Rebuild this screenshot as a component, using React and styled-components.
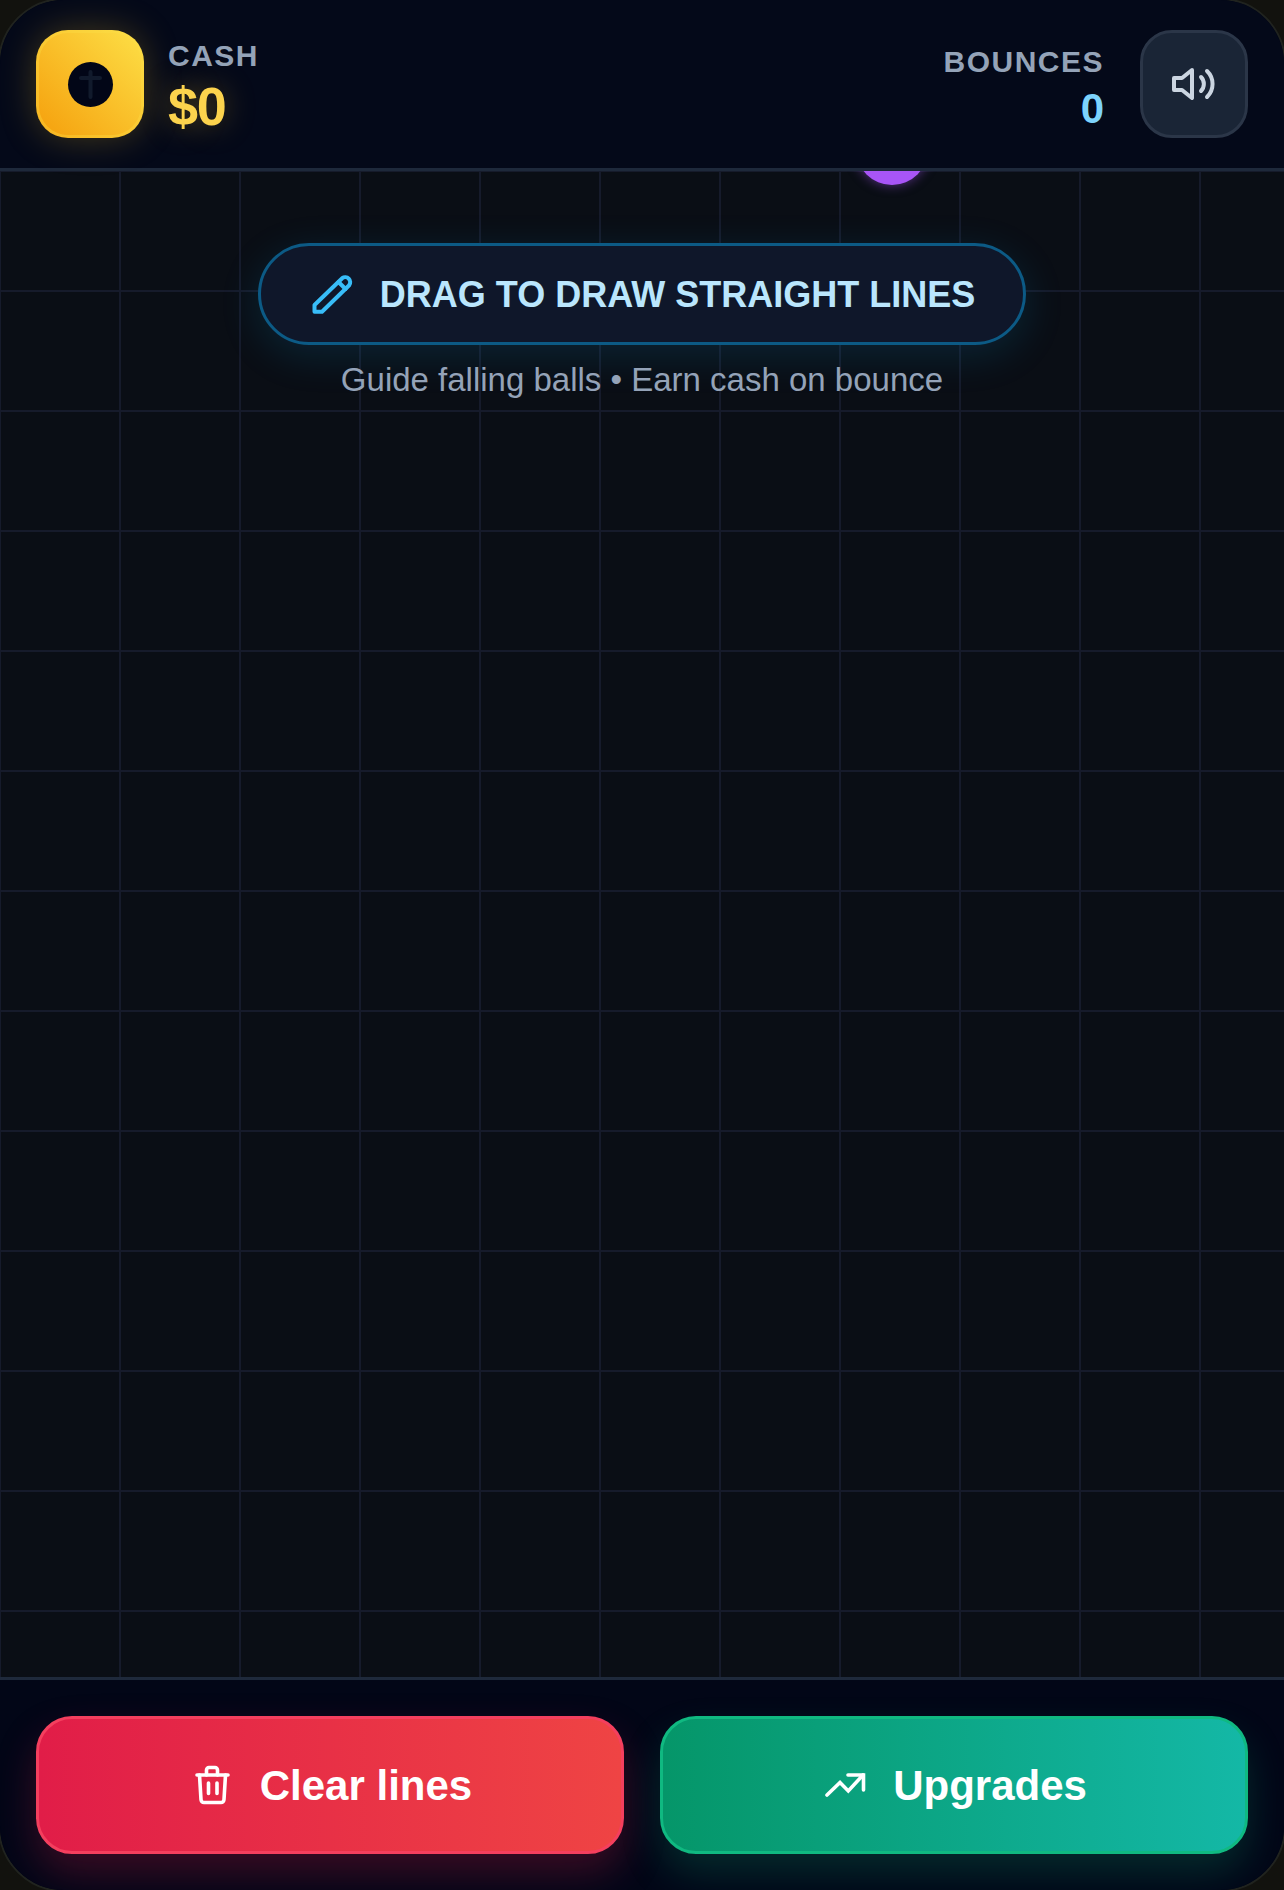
import React from 'react';
import styled, { createGlobalStyle } from 'styled-components';

const GlobalStyle = createGlobalStyle`
  html, body {
    margin: 0;
    padding: 0;
    overflow: hidden;
    background: #12120e;
  }
  * {
    box-sizing: border-box;
  }
`;

const App = () => (
  <Frame>
    <GlobalStyle />
    <Header>
      <CashGroup>
        <CoinBox>
          <Coin>
            <svg width="45" height="45" viewBox="0 0 45 45" fill="none" stroke="#111a2c" strokeWidth="4" strokeLinecap="round">
              <path d="M22.5 10v25M13 16h19" />
            </svg>
          </Coin>
        </CoinBox>
        <CashStat>
          <CashLabel>CASH</CashLabel>
          <CashValue>$0</CashValue>
        </CashStat>
      </CashGroup>
      <BounceGroup>
        <BounceStat>
          <BounceLabel>BOUNCES</BounceLabel>
          <BounceValue>0</BounceValue>
        </BounceStat>
        <SoundButton>
          <svg width="48" height="48" viewBox="0 0 24 24" fill="none" stroke="#cbd5e1" strokeWidth="2" strokeLinecap="round" strokeLinejoin="round">
            <path d="M11 5 6 9H2v6h4l5 4z" />
            <path d="M15.5 8.5a5 5 0 0 1 0 7" />
            <path d="M18.5 5.5a9 9 0 0 1 0 13" />
          </svg>
        </SoundButton>
      </BounceGroup>
    </Header>
    <Board>
      <Ball />
      <Hint>
        <HintPill>
          <svg width="48" height="48" viewBox="0 0 48 48" fill="none" stroke="#38bdf8" strokeWidth="4" strokeLinecap="round" strokeLinejoin="round">
            <path d="M36.2 8.2a5 5 0 0 1 7 7L16 41.7H8.5V35z" />
            <path d="M32.5 12 39.5 19" />
          </svg>
          <HintText>DRAG TO DRAW STRAIGHT LINES</HintText>
        </HintPill>
        <HintSub>Guide falling balls • Earn cash on bounce</HintSub>
      </Hint>
    </Board>
    <Footer>
      <ActionButton $from="#e11d48" $to="#ef4444" $edge="#f43f5e" $glow="rgba(225, 29, 72, 0.25)">
        <svg width="48" height="48" viewBox="0 0 48 48" fill="none" stroke="#fff" strokeWidth="3.6" strokeLinecap="round" strokeLinejoin="round">
          <path d="M9 14h31" />
          <path d="M18.5 14V9a2.5 2.5 0 0 1 2.5-2.5h6A2.5 2.5 0 0 1 29.5 9v5" />
          <path d="M11.5 14 13 38.5a3 3 0 0 0 3 3h17a3 3 0 0 0 3-3L37.5 14" />
          <path d="M20.5 22v10.5M29 22v10.5" />
        </svg>
        <ActionLabel>Clear lines</ActionLabel>
      </ActionButton>
      <ActionButton $from="#059669" $to="#14b8a6" $edge="#10b981" $glow="rgba(16, 185, 129, 0.2)">
        <svg width="48" height="48" viewBox="0 0 48 48" fill="none" stroke="#fff" strokeWidth="3.6" strokeLinecap="round" strokeLinejoin="miter">
          <path d="M6 34 19 21.5l8.3 8.5L42 14" />
          <path d="M27 14h15.5v15" />
        </svg>
        <ActionLabel>Upgrades</ActionLabel>
      </ActionButton>
    </Footer>
  </Frame>
);

export default App;

const Frame = styled.div`
  width: 1288px;
  height: 1894px;
  margin: -2px;
  display: flex;
  flex-direction: column;
  border-radius: 66px;
  border: 2px solid #20231f;
  overflow: hidden;
  background: #020617;
  font-family: "Liberation Sans", Arial, sans-serif;
`;

const Header = styled.header`
  position: relative;
  z-index: 2;
  flex: 0 0 171px;
  padding: 0 36px;
  display: flex;
  align-items: center;
  justify-content: space-between;
  background: #040919;
  border-bottom: 3px solid #1e293b;
`;

const CashGroup = styled.div`
  display: flex;
  align-items: center;
  gap: 24px;
`;

const CoinBox = styled.div`
  width: 108px;
  height: 108px;
  display: flex;
  align-items: center;
  justify-content: center;
  border-radius: 32px;
  border: 3px solid rgba(253, 224, 71, 0.35);
  background: linear-gradient(45deg, #f59e0b, #fde047) border-box;
  box-shadow: 0 0 36px rgba(251, 191, 36, 0.25);
`;

const Coin = styled.div`
  width: 45px;
  height: 45px;
  flex: none;
  display: flex;
  align-items: center;
  justify-content: center;
  border-radius: 50%;
  background: #020617;
`;

const CashStat = styled.div`
  display: flex;
  flex-direction: column;
  align-items: flex-start;
`;

const BounceStat = styled.div`
  display: flex;
  flex-direction: column;
  align-items: flex-end;
`;

const CashLabel = styled.div`
  font-size: 30px;
  font-weight: 700;
  line-height: 40px;
  letter-spacing: 1.5px;
  color: #94a3b8;
`;

const BounceLabel = styled(CashLabel)`
  line-height: 50px;
`;

const CashValue = styled.div`
  margin-top: 3px;
  font-size: 54px;
  font-weight: 700;
  line-height: 54px;
  letter-spacing: -1.35px;
  color: #fcd34d;
  text-shadow: 0 0 30px rgba(251, 191, 36, 0.35);
`;

const BounceGroup = styled.div`
  display: flex;
  align-items: center;
  gap: 36px;
`;

const BounceValue = styled.div`
  font-size: 42px;
  font-weight: 700;
  line-height: 44px;
  color: #7dd3fc;
`;

const SoundButton = styled.button`
  width: 108px;
  height: 108px;
  padding: 0;
  display: flex;
  align-items: center;
  justify-content: center;
  border-radius: 32px;
  border: 3px solid #2b3648;
  background: #1a2536;
`;

const Board = styled.main`
  position: relative;
  flex: 1;
  display: flex;
  justify-content: center;
  background-color: #0a0e15;
  background-image:
    linear-gradient(#161b2b 2px, transparent 2px),
    linear-gradient(90deg, #161b2b 2px, transparent 2px);
  background-size: 120px 120px;
  background-position: -1px -1px;
`;

const Ball = styled.div`
  position: absolute;
  left: 856px;
  top: -58px;
  width: 72px;
  height: 72px;
  border-radius: 50%;
  background: #a855f7;
  box-shadow: 0 0 12px rgba(168, 85, 247, 0.5);
`;

const Hint = styled.div`
  padding-top: 72px;
  display: flex;
  flex-direction: column;
  align-items: center;
  gap: 16px;
`;

const HintPill = styled.div`
  height: 102px;
  padding: 0 48px 0 45px;
  display: flex;
  align-items: center;
  gap: 26px;
  border-radius: 51px;
  border: 3px solid #0c5a85;
  background: #0f172a;
  box-shadow: 0 10px 40px rgba(14, 165, 233, 0.15);
`;

const HintText = styled.span`
  padding-top: 2px;
  font-size: 36px;
  font-weight: 700;
  color: #bae6fd;
`;

const HintSub = styled.div`
  font-size: 33px;
  color: #94a3b8;
`;

const Footer = styled.footer`
  position: relative;
  z-index: 2;
  flex: 0 0 213px;
  padding: 36px 36px 0;
  display: grid;
  grid-template-columns: 1fr 1fr;
  gap: 36px;
  align-items: start;
  background: #020617;
  border-top: 3px solid #1e293b;
`;

const ActionButton = styled.button`
  height: 138px;
  display: flex;
  align-items: center;
  justify-content: center;
  gap: 24px;
  border-radius: 36px;
  border: 3px solid ${(p) => p.$edge};
  background: linear-gradient(90deg, ${(p) => p.$from}, ${(p) => p.$to});
  box-shadow: 0 20px 40px ${(p) => p.$glow};
  font-family: inherit;
  font-size: 42px;
  font-weight: 700;
  color: #fff;
`;

const ActionLabel = styled.span`
  padding-top: 2px;
`;
